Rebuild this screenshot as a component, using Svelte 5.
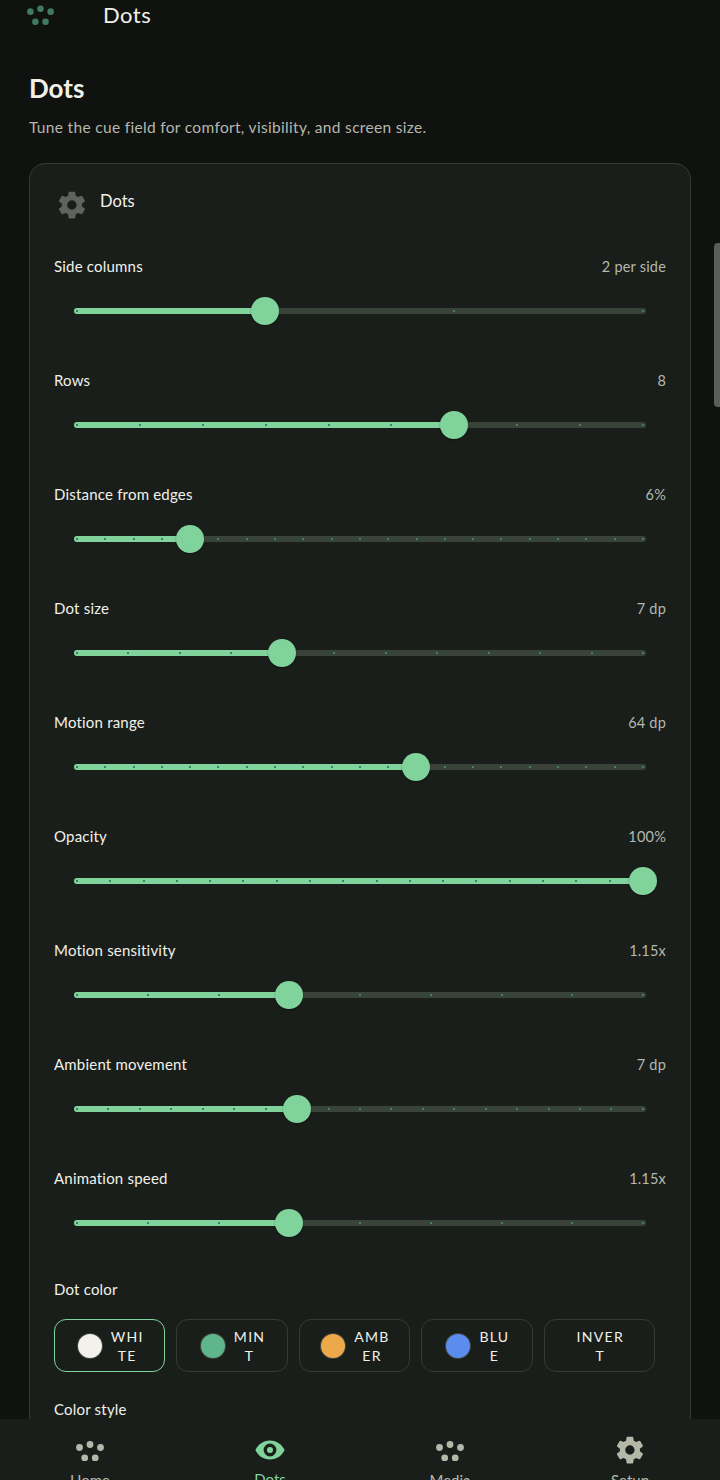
<script>
  const sliders = [
    { label: 'Side columns', value: '2 per side', steps: 3, at: 1 },
    { label: 'Rows', value: '8', steps: 9, at: 6 },
    { label: 'Distance from edges', value: '6%', steps: 20, at: 4 },
    { label: 'Dot size', value: '7 dp', steps: 11, at: 4 },
    { label: 'Motion range', value: '64 dp', steps: 20, at: 12 },
    { label: 'Opacity', value: '100%', steps: 17, at: 17 },
    { label: 'Motion sensitivity', value: '1.15x', steps: 8, at: 3 },
    { label: 'Ambient movement', value: '7 dp', steps: 18, at: 7 },
    { label: 'Animation speed', value: '1.15x', steps: 8, at: 3 }
  ];

  const colors = [
    { name: ['WHI', 'TE'], swatch: '#f3f1ec', active: true },
    { name: ['MIN', 'T'], swatch: '#5fb58c' },
    { name: ['AMB', 'ER'], swatch: '#eda84a' },
    { name: ['BLU', 'E'], swatch: '#5b8def' },
    { name: ['INVER', 'T'] }
  ];

  const tabs = [
    { label: 'Home', icon: 'dots' },
    { label: 'Dots', icon: 'eye', active: true },
    { label: 'Media', icon: 'dots' },
    { label: 'Setup', icon: 'gear' }
  ];

  const gear = 'M19.4 13c.04-.33.06-.66.06-1s-.02-.67-.06-1l2.11-1.65a.5.5 0 0 0 .12-.64l-2-3.46a.5.5 0 0 0-.61-.22l-2.49 1a7.3 7.3 0 0 0-1.73-1l-.38-2.65A.49.49 0 0 0 13.93 2h-4a.49.49 0 0 0-.49.42l-.38 2.65c-.63.25-1.2.6-1.73 1l-2.49-1a.5.5 0 0 0-.61.22l-2 3.46a.5.5 0 0 0 .12.64L4.46 11c-.04.33-.07.67-.07 1s.03.67.07 1l-2.11 1.65a.5.5 0 0 0-.12.64l2 3.46c.12.22.39.3.61.22l2.49-1c.53.4 1.1.74 1.73 1l.38 2.65c.05.24.25.42.49.42h4c.24 0 .45-.18.49-.42l.38-2.65c.63-.26 1.2-.6 1.73-1l2.49 1c.22.08.49 0 .61-.22l2-3.46a.5.5 0 0 0-.12-.64L19.4 13zM11.93 15.5a3.5 3.5 0 1 1 0-7 3.5 3.5 0 0 1 0 7z';
</script>

{#snippet dotsIcon(cls)}
  <svg class={cls} viewBox="0 0 28 20" aria-hidden="true">
    <circle cx="3.5" cy="6.5" r="3.4" />
    <circle cx="14" cy="3.5" r="3.4" />
    <circle cx="24.5" cy="6.5" r="3.4" />
    <circle cx="8.7" cy="17" r="3.4" />
    <circle cx="19.2" cy="17" r="3.4" />
  </svg>
{/snippet}

<div class="page">
  <header class="topbar">
    {@render dotsIcon('brand')}
    <span class="topbar-title">Dots</span>
  </header>

  <main class="content">
    <h1>Dots</h1>
    <p class="intro">Tune the cue field for comfort, visibility, and screen size.</p>

    <section class="card">
      <div class="card-head">
        <svg class="card-gear" viewBox="0 0 24 24" aria-hidden="true"><path d={gear} /></svg>
        <span>Dots</span>
      </div>

      {#each sliders as s}
        <div class="setting">
          <div class="setting-row">
            <span class="setting-label">{s.label}</span>
            <span class="setting-value">{s.value}</span>
          </div>
          <div class="slider">
            <div class="track">
              <div class="fill" style="width: {(s.at / s.steps) * 100}%"></div>
              <div class="ticks">
                {#each { length: s.steps + 1 } as _, i}
                  <i class="tick"></i>
                {/each}
              </div>
              <div class="thumb-rail">
                <div class="thumb" style="left: {(s.at / s.steps) * 100}%"></div>
              </div>
            </div>
          </div>
        </div>
      {/each}

      <div class="group-label">Dot color</div>
      <div class="chips">
        {#each colors as c}
          <button class="chip" class:active={c.active}>
            {#if c.swatch}<span class="swatch" style="background: {c.swatch}"></span>{/if}
            <span class="chip-text">{c.name[0]}<br />{c.name[1]}</span>
          </button>
        {/each}
      </div>

      <div class="group-label style-label">Color style</div>
    </section>
  </main>

  <div class="scrollbar"></div>

  <nav class="tabs">
    {#each tabs as t}
      <div class="tab" class:active={t.active}>
        {#if t.icon === 'dots'}
          {@render dotsIcon('tab-icon')}
        {:else if t.icon === 'eye'}
          <svg class="tab-icon eye" viewBox="0 0 30 20" aria-hidden="true">
            <path fill-rule="evenodd" d="M15 0.5C22 0.5 27.5 5 29.6 10 27.5 15 22 19.5 15 19.5S2.5 15 0.4 10C2.5 5 8 0.5 15 0.5zM15 3.6a6.4 6.4 0 1 0 0 12.8 6.4 6.4 0 0 0 0-12.8z" />
            <circle cx="15" cy="10" r="3" />
          </svg>
        {:else}
          <svg class="tab-icon gear" viewBox="0 0 24 24" aria-hidden="true"><path d={gear} /></svg>
        {/if}
        <span class="tab-label">{t.label}</span>
      </div>
    {/each}
  </nav>
</div>

<style>
  :global(body) {
    margin: 0;
    background: #10120f;
  }

  .page {
    position: relative;
    width: 720px;
    height: 1480px;
    overflow: hidden;
    background: #10120f;
    color: #f1f1ea;
    font-family: Lato, "Open Sans", sans-serif;
  }

  .topbar {
    display: flex;
    align-items: center;
    height: 30px;
    padding-left: 27px;
  }

  .brand {
    width: 27px;
    height: 20px;
    margin-top: -1px;
    fill: #3f7a62;
  }

  .topbar-title {
    margin: -2px 0 0 49px;
    font-size: 22px;
    letter-spacing: 0.5px;
  }

  .content {
    padding: 41px 29px 0;
  }

  h1 {
    margin: 0;
    height: 34px;
    font-size: 26px;
    line-height: 34px;
    font-weight: 700;
  }

  .intro {
    margin: 12px 0 0;
    height: 20px;
    font-size: 15.5px;
    line-height: 20px;
    color: #b5b8ae;
    letter-spacing: 0.32px;
  }

  .card {
    margin-top: 26px;
    padding: 0 24px;
    height: 1400px;
    box-sizing: border-box;
    background: #191e1a;
    border: 1px solid #353b35;
    border-radius: 16px;
  }

  .card-head {
    display: flex;
    align-items: center;
    gap: 12px;
    height: 32px;
    margin-top: 21px;
    padding-left: 2px;
    font-size: 16.5px;
  }

  .card-gear {
    width: 32px;
    height: 32px;
    margin-top: 8px;
    fill: #5e635d;
  }

  .setting {
    height: 114px;
  }

  .card-head + .setting {
    margin-top: 37px;
  }

  .setting-row {
    display: flex;
    justify-content: space-between;
    align-items: center;
    height: 24px;
    font-size: 15px;
    letter-spacing: 0.2px;
  }

  .setting-value {
    color: #b5b8ae;
    font-size: 14.5px;
  }

  .slider {
    padding: 30px 20px 0;
  }

  .track {
    position: relative;
    height: 6px;
    background: #3a433a;
    border-radius: 3px;
  }

  .fill {
    position: absolute;
    top: 0;
    bottom: 0;
    left: 0;
    min-width: 6px;
    background: #81d39c;
    border-radius: 3px;
  }

  .ticks {
    position: absolute;
    inset: 0 2px;
    display: flex;
    justify-content: space-between;
    align-items: center;
  }

  .tick {
    width: 2px;
    height: 2px;
    background: #437f66;
  }

  .thumb-rail {
    position: absolute;
    inset: 0 3px;
  }

  .thumb {
    position: absolute;
    top: -11px;
    width: 28px;
    height: 28px;
    margin-left: -14.4px;
    background: #81d39c;
    border-radius: 50%;
    box-shadow: 0 1px 2px rgba(0, 0, 0, 0.35);
  }

  .group-label {
    height: 20px;
    line-height: 20px;
    font-size: 15px;
    letter-spacing: 0.2px;
    margin-top: -1px;
  }

  .chips {
    display: flex;
    gap: 11px;
    margin-top: 20px;
    width: 601px;
  }

  .chip {
    flex: 1 1 0;
    min-width: 0;
    height: 53px;
    display: flex;
    align-items: center;
    justify-content: center;
    gap: 9px;
    padding: 0 0 0 2px;
    background: transparent;
    border: 1px solid #353b35;
    border-radius: 12px;
    color: #f1f1ea;
    font: inherit;
    font-size: 14px;
    letter-spacing: 1.3px;
    line-height: 19px;
  }

  .chip.active {
    border-color: #81d39c;
  }

  .swatch {
    flex: none;
    width: 24px;
    height: 24px;
    border-radius: 50%;
    box-shadow: 0 0 0 1px #40463f;
  }

  .chip-text {
    text-align: center;
  }

  .style-label {
    margin-top: 27px;
  }

  .scrollbar {
    position: absolute;
    top: 243px;
    right: 0;
    width: 6px;
    height: 164px;
    background: #5a5f59;
    border-radius: 4px 0 0 4px;
  }

  .tabs {
    position: absolute;
    left: 0;
    right: 0;
    bottom: 0;
    height: 61px;
    display: grid;
    grid-template-columns: repeat(4, 1fr);
    background: #191e1a;
  }

  .tab {
    display: flex;
    flex-direction: column;
    align-items: center;
    padding-top: 22px;
    color: #b5b8a9;
    font-size: 15px;
  }

  .tab.active {
    color: #81d39c;
  }

  .tab-icon {
    width: 28px;
    height: 20px;
    fill: #b5b8a9;
  }

  .tab-icon.eye {
    width: 30px;
    height: 22px;
    margin-top: -2px;
    margin-bottom: -1px;
    fill: #81d39c;
  }

  .tab-icon.gear {
    width: 32px;
    height: 32px;
    margin-top: -7px;
    margin-bottom: -5px;
  }

  .tab-label {
    margin-top: 10px;
  }
</style>
